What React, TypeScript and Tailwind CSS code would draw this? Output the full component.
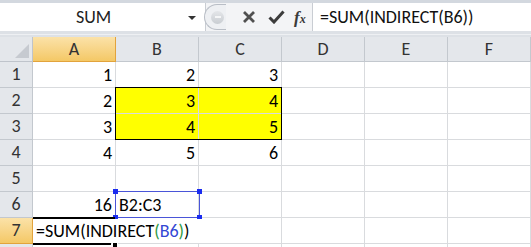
import React from "react";

const FONT = { fontFamily: "Carlito, Lato, 'Open Sans', sans-serif" };

const cols = ["A", "B", "C", "D", "E", "F"];

const data: Record<number, (string | undefined)[]> = {
  1: ["1", "2", "3"],
  2: ["2", "3", "4"],
  3: ["3", "4", "5"],
  4: ["4", "5", "6"],
  5: [],
  6: ["16", "B2:C3"],
  7: [],
  8: [],
};

function isYellow(r: number, c: number) {
  return (r === 2 || r === 3) && (c === 1 || c === 2);
}

export default function App() {
  const rows = [1, 2, 3, 4, 5, 6, 7, 8];
  return (
    <div
      className="w-[531px] h-[247px] overflow-hidden bg-white relative text-[#000]"
      style={FONT}
    >
      {/* Formula bar */}
      <div className="h-[37px] bg-[#dde1e6] flex flex-col">
        <div className="h-[3px] bg-[#d3d8df]" />
        <div className="h-[28px] flex">
          <div className="w-[206px] bg-white flex items-center border-r border-[#c9cdd3]">
            <div className="flex-1 text-center text-[18px] text-[#222]">SUM</div>
            <svg width="10" height="6" viewBox="0 0 10 6" className="mr-[8px] mt-[2px]">
              <path d="M1 1 L9 1 L5 5 Z" fill="#333" />
            </svg>
          </div>
          <div className="w-[106px] flex items-center bg-[#f3f4f6] relative">
            <div className="absolute left-[-2px] top-[1px] h-[26px] w-[22px] rounded-l-full border border-[#b9bec6] border-r-0 bg-[#eef0f3]" />
            <div className="relative ml-[5px] w-[13px] h-[13px] rounded-full bg-gradient-to-b from-[#e4e6e9] to-[#c9cdd2] flex items-center justify-center">
              <div className="w-[6px] h-[2px] bg-[#f5f6f7]" />
            </div>
            <svg width="14" height="14" viewBox="0 0 14 14" className="ml-[18px]">
              <path d="M2 2 L12 12 M12 2 L2 12" stroke="#505050" strokeWidth="2.8" />
            </svg>
            <svg width="17" height="14" viewBox="0 0 17 14" className="ml-[12px]">
              <path d="M1.5 7.5 L6 12 L15.5 1.5" stroke="#3c3c3c" strokeWidth="3" fill="none" />
            </svg>
            <span
              className="ml-[9px] text-[17px] italic font-bold text-[#3a3a3a] leading-none"
              style={{ fontFamily: "'Liberation Serif', serif" }}
            >
              f<span className="text-[12px]">x</span>
            </span>
          </div>
          <div className="flex-1 bg-white border-l border-[#c9cdd3] flex items-center pl-[7px] text-[18px] text-[#111]">
            =SUM(INDIRECT(B6))
          </div>
        </div>
        <div className="h-[6px] flex items-center">
          <div className="w-full h-[1px] bg-[#eef0f3]" />
        </div>
      </div>

      {/* Grid */}
      <div className="relative">
        <div className="grid grid-cols-[33px_repeat(6,83px)] grid-rows-[25px_repeat(8,26px)]">
          {/* corner */}
          <div className="bg-[#e4e7eb] border-r border-b border-[#bfc4cb] relative">
            <svg width="14" height="14" viewBox="0 0 14 14" className="absolute right-[3px] bottom-[3px]">
              <path d="M14 0 L14 14 L0 14 Z" fill="#c6cad0" />
            </svg>
          </div>
          {cols.map((c, i) => (
            <div
              key={c}
              className={
                i === 0
                  ? "bg-gradient-to-b from-[#fbe2a8] to-[#f4c865] border-r border-b border-[#e2a33c] flex items-center justify-center text-[18px] text-[#333]"
                  : "bg-[#e4e7eb] border-r border-b border-[#c3c8ce] flex items-center justify-center text-[18px] text-[#333]"
              }
            >
              {c}
            </div>
          ))}
          {rows.map((r) => (
            <React.Fragment key={r}>
              <div
                className={
                  r === 7
                    ? "bg-gradient-to-b from-[#fbe2a8] to-[#f4c865] border-r border-b border-[#e2a33c] flex items-center justify-center text-[18px] text-[#333]"
                    : "bg-[#e4e7eb] border-r border-b border-[#c3c8ce] flex items-center justify-center text-[18px] text-[#333]"
                }
              >
                {r < 8 ? r : null}
              </div>
              {cols.map((c, ci) => {
                const v = data[r][ci];
                const y = isYellow(r, ci);
                const left = r === 6 && ci === 1;
                return (
                  <div
                    key={c}
                    className={
                      (y ? "bg-[#ffff00] " : "bg-white ") +
                      "border-r border-b border-[#d9dbde] flex items-end pb-[1px] text-[18px] leading-[22px] " +
                      (left ? "justify-start pl-[3px]" : "justify-end pr-[3px]")
                    }
                  >
                    {v}
                  </div>
                );
              })}
            </React.Fragment>
          ))}
        </div>

        {/* Yellow range outline */}
        <div className="absolute left-[115px] top-[50px] w-[167px] h-[53px] border border-black pointer-events-none" />

        {/* B6 selection */}
        <div className="absolute left-[115px] top-[154px] w-[85px] h-[27px] border border-[#4a55d8] pointer-events-none">
          <div className="absolute left-[-3px] top-[-3px] w-[5px] h-[5px] bg-[#1a2cf0]" />
          <div className="absolute right-[-3px] top-[-3px] w-[5px] h-[5px] bg-[#1a2cf0]" />
          <div className="absolute left-[-3px] bottom-[-3px] w-[5px] h-[5px] bg-[#1a2cf0]" />
          <div className="absolute right-[-3px] bottom-[-3px] w-[5px] h-[5px] bg-[#1a2cf0]" />
        </div>

        {/* A7 edit cell */}
        <div className="absolute left-[33px] top-[182px] w-[170px] h-[24px] bg-white flex items-end pb-[1px] pl-[3px] text-[18px] leading-[22px]">
          <span>=SUM(INDIRECT</span>
          <span className="text-[#2f9a3f]">(</span>
          <span className="text-[#3347d4]">B6</span>
          <span className="text-[#2f9a3f]">)</span>
          <span>)</span>
        </div>
        <div className="absolute left-[33px] top-[180px] w-[82px] h-[2px] bg-black" />
        <div className="absolute left-[33px] top-[206px] w-[78px] h-[2px] bg-black" />
        <div className="absolute left-[112px] top-[205px] w-[6px] h-[6px] bg-black border border-white" />
      </div>
    </div>
  );
}
